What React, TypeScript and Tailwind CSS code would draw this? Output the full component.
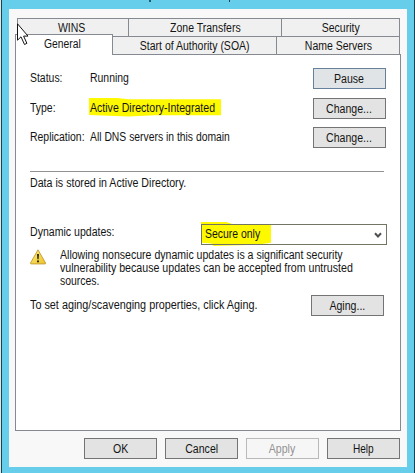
import type { ReactNode } from "react";

function Button({ children, className = "", text = "scale-x-[0.88]" }: { children: ReactNode; className?: string; text?: string }) {
  return (
    <button className={`flex h-[21px] w-[73px] shrink-0 items-center justify-center border pt-px ${className || "border-[#747476] bg-[#e3e3e3]"}`}>
      <span className={`inline-block ${text}`}>{children}</span>
    </button>
  );
}

function Label({ children, className = "scale-x-[0.87]" }: { children: ReactNode; className?: string }) {
  return <span className={`inline-block origin-left whitespace-nowrap ${className}`}>{children}</span>;
}

function Tab({ children, className }: { children: ReactNode; className: string }) {
  return (
    <div className={`flex items-center justify-center border-t border-r border-[#858991] bg-[#f0f0f0] pt-px ${className}`}>
      <span className="inline-block scale-x-[0.875]">{children}</span>
    </div>
  );
}

function Warning() {
  return (
    <svg className="block shrink-0" width="17" height="16" viewBox="0 0 17 16">
      <defs>
        <linearGradient id="warn" x1="0" y1="0" x2="1" y2="1">
          <stop offset="0" stopColor="#fff17a" />
          <stop offset="1" stopColor="#ecc02a" />
        </linearGradient>
      </defs>
      <path d="M8 .8 15.6 14.1Q15.8 14.9 15 14.9H1Q.2 14.9.5 14.1Z" fill="url(#warn)" stroke="#c7a23a" strokeWidth="1" strokeLinejoin="round" />
      <path d="M7 5h2l-.4 5.2H7.4ZM7 11.4h2v1.9H7Z" fill="#292510" />
    </svg>
  );
}

export default function App() {
  return (
    <div className="relative flex h-[473px] w-[415px] overflow-hidden bg-[#66cdeb] font-['Liberation_Sans',Arial,sans-serif] text-[12px] leading-[13px] text-[#141414]">
      <div className="w-px shrink-0 bg-[#dfe8e7]" />
      <div className="w-px shrink-0 bg-[#174450]" />
      <div className="w-[412px] shrink-0 pl-[7px] pt-[9px]">
        <div className="h-[458px] w-[398px] bg-[#f7f8f7] pl-[6px] pt-[9px]">
          <div className="ml-[2px] flex h-[18px] w-[383px] border-l border-[#858991]">
            <Tab className="w-[111px] pr-[3px]">WINS</Tab>
            <Tab className="w-[153px]">Zone Transfers</Tab>
            <Tab className="w-[118px]">Security</Tab>
          </div>
          <div className="flex h-[18px] w-[385px]">
            <div className="z-10 -mt-[2px] flex h-[21px] w-[98px] justify-center border border-b-0 border-[#858991] bg-white pt-[3px] pr-[3px]">
              <span className="inline-block scale-x-[0.86]">General</span>
            </div>
            <Tab className="w-[164px]">Start of Authority (SOA)</Tab>
            <Tab className="w-[123px]">Name Servers</Tab>
          </div>
          <div className="flex h-[377px] w-[386px] flex-col border border-[#858991] bg-white pl-[14px] pt-[13px]">
            <div className="flex h-[21px] w-[356px] items-center">
              <div className="w-[60px]"><Label>Status:</Label></div>
              <div className="grow"><Label>Running</Label></div>
              <Button className="border-[#668199] bg-[#e1e4e6]">Pause</Button>
            </div>
            <div className="mt-[9px] flex h-[21px] w-[356px] items-center">
              <div className="w-[59px]"><Label>Type:</Label></div>
              <div className="-mt-[3px] mr-auto h-[19px] w-[132px] bg-[#fff900] pl-px pt-[4px] [clip-path:polygon(0_0,18%_0,30%_9%,100%_9%,100%_93%,50%_93%,30%_100%,0_92%)]">
                <Label className="scale-x-[0.88]">Active Directory-Integrated</Label>
              </div>
              <Button>Change...</Button>
            </div>
            <div className="mt-[8px] flex h-[21px] w-[356px] items-center">
              <div className="w-[60px]"><Label>Replication:</Label></div>
              <div className="grow"><Label className="scale-x-[0.863]">All DNS servers in this domain</Label></div>
              <Button>Change...</Button>
            </div>
            <div className="mt-[23px] h-px w-[354px] bg-[#929292]" />
            <div className="mt-[5px] h-[13px]"><Label className="scale-x-[0.888]">Data is stored in Active Directory.</Label></div>
            <div className="mt-[32px] flex h-[23px] w-[357px]">
              <div className="mt-[4px] w-[171px]"><Label className="scale-x-[0.88]">Dynamic updates:</Label></div>
              <div className="relative mt-[2px] flex h-[21px] w-[186px] items-center border border-[#747476] bg-white">
                <div className="absolute -left-px -top-[3px] h-[24px] w-[70px] bg-[#fff900] [clip-path:polygon(0_0,36%_0,45%_8%,100%_12%,100%_86%,80%_95%,18%_100%,15%_90%,0_86%)]" />
                <div className="absolute -inset-px border border-[#747462]" />
                <div className="relative pl-[3px]"><Label>Secure only</Label></div>
                <svg className="absolute right-[4px] top-[7px]" width="8" height="7" viewBox="0 0 8 7">
                  <path d="M1 1.3 4 4.5 7 1.3" fill="none" stroke="#505050" strokeWidth="2" />
                </svg>
              </div>
            </div>
            <div className="mt-[4px] flex h-[42px]">
              <Warning />
              <div className="ml-[13px] flex flex-col items-start">
                <Label className="scale-x-[0.879]">Allowing nonsecure dynamic updates is a significant security</Label>
                <Label className="scale-x-[0.887]">vulnerability because updates can be accepted from untrusted</Label>
                <Label>sources.</Label>
              </div>
            </div>
            <div className="mt-[4px] flex h-[21px] w-[354px] items-center justify-between">
              <Label className="scale-x-[0.902]">To set aging/scavenging properties, click Aging.</Label>
              <Button>Aging...</Button>
            </div>
          </div>
          <div className="mt-[7px] ml-[69px] flex gap-2">
            <Button>OK</Button>
            <Button>Cancel</Button>
            <Button className="border-[#b9b9b9] bg-[#f6f6f6] text-[#929292]">Apply</Button>
            <Button text="scale-x-[0.84]">Help</Button>
          </div>
        </div>
      </div>
      <div className="w-px shrink-0 bg-[#174450]" />
      <div className="absolute left-[149px] top-0 h-[2px] w-[2px] bg-[#1b5c70]" />
      <div className="absolute left-[229px] top-0 h-[2px] w-px bg-[#12404f]" />
      <svg className="absolute left-[17px] top-[23px] z-20" width="13" height="23" viewBox="0 0 13 23">
        <path d="M.5.8V17.2l3.5-3.4 3.5 7.7 2.4-1.2-3.3-7.2H11Z" fill="white" stroke="#141414" strokeWidth="1" />
      </svg>
    </div>
  );
}
